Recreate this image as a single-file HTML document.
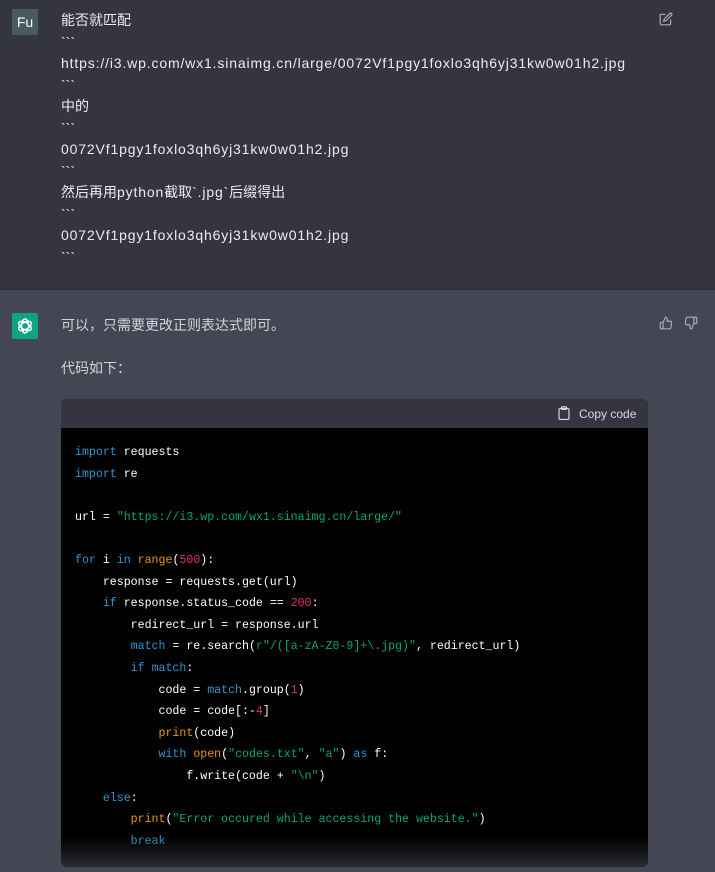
<!DOCTYPE html>
<html><head><meta charset="utf-8"><style>
*{margin:0;padding:0;box-sizing:border-box}
body{width:715px;height:872px;overflow:hidden;background:#444654;font-family:"Liberation Sans","Noto Sans CJK SC",sans-serif;color:#ececf1;font-size:14px}
.user{position:absolute;left:0;top:0;width:715px;height:290px;background:#343541;border-bottom:1px solid #2a2b32}
.av{position:absolute;left:12px;width:26px;height:26px;border-radius:2px}
.ut{position:absolute;left:61px;top:10px;line-height:21.5px;white-space:nowrap}
.l{letter-spacing:0.85px}
.at{position:absolute;left:61px;top:315px;line-height:21.5px;color:#d1d5db}
.code{position:absolute;left:61px;top:399px;width:587px;height:468px;border-radius:6px;overflow:hidden;background:#000}
.hd{height:29px;background:#343541;color:#d9d9e3;font-size:12px;position:relative}
pre{font-family:"Liberation Mono","Noto Sans CJK SC",monospace;font-size:11.6px;line-height:21.6px;color:#fff;padding:14px 0 0 14px}
.k{color:#2e95d3}.s{color:#00a67d}.n{color:#df3079}.b{color:#e9950c}
</style></head><body>
<div class="user">
<div class="av" style="top:9px;background:#4a5a63;color:#fff;font-size:14px;text-align:center;line-height:26px">Fu</div>
<div class="ut">能否就匹配<br>&#96;&#96;&#96;<br><span class="l">https://i3.wp.com/wx1.sinaimg.cn/large/0072Vf1pgy1foxlo3qh6yj31kw0w01h2.jpg</span><br>&#96;&#96;&#96;<br>中的<br>&#96;&#96;&#96;<br><span class="l">0072Vf1pgy1foxlo3qh6yj31kw0w01h2.jpg</span><br>&#96;&#96;&#96;<br>然后再用<span class="l">python</span>截取<span class="l">&#96;.jpg&#96;</span>后缀得出<br>&#96;&#96;&#96;<br><span class="l">0072Vf1pgy1foxlo3qh6yj31kw0w01h2.jpg</span><br>&#96;&#96;&#96;</div>
<svg style="position:absolute;left:659px;top:12px" width="14" height="14" viewBox="0 0 24 24" fill="none" stroke="#acacbe" stroke-width="2"><path d="M11 4H4a2 2 0 0 0-2 2v14a2 2 0 0 0 2 2h14a2 2 0 0 0 2-2v-7"/><path d="M18.5 2.5a2.1 2.1 0 0 1 3 3L12 15l-4 1 1-4z"/></svg>
</div>
<div class="av" style="top:313px;background:#10a37f"><svg width="26" height="26" viewBox="0 0 26 26" fill="none" stroke="#fff" stroke-width="1.4"><g transform="translate(13 13)"><ellipse rx="3.5" ry="7"/><ellipse rx="3.5" ry="7" transform="rotate(60)"/><ellipse rx="3.5" ry="7" transform="rotate(120)"/></g></svg></div>
<div class="at">可以，只需要更改正则表达式即可。<br><br>代码如下：</div>
<svg style="position:absolute;left:659px;top:316px" width="14" height="14" viewBox="0 0 24 24" fill="none" stroke="#acacbe" stroke-width="2"><path d="M14 9V5a3 3 0 0 0-3-3l-4 9v11h11.3a2 2 0 0 0 2-1.7l1.4-9a2 2 0 0 0-2-2.3zM7 22H4a2 2 0 0 1-2-2v-7a2 2 0 0 1 2-2h3"/></svg>
<svg style="position:absolute;left:684px;top:316px" width="14" height="14" viewBox="0 0 24 24" fill="none" stroke="#acacbe" stroke-width="2"><path d="M10 15v4a3 3 0 0 0 3 3l4-9V2H5.7a2 2 0 0 0-2 1.7l-1.4 9a2 2 0 0 0 2 2.3zM17 2h3a2 2 0 0 1 2 2v7a2 2 0 0 1-2 2h-3"/></svg>
<div class="code">
<div class="hd"><svg style="position:absolute;left:497px;top:7px" width="12" height="14" viewBox="0 0 12 14" fill="none" stroke="#d9d9e3" stroke-width="1.2"><rect x="1" y="2.5" width="10" height="11" rx="1.5"/><rect x="3.5" y="0.8" width="5" height="2.6" rx="0.6"/></svg><span style="position:absolute;left:518px;top:8px">Copy code</span></div>
<pre><span class="k">import</span> requests
<span class="k">import</span> re

url = <span class="s">"https://i3.wp.com/wx1.sinaimg.cn/large/"</span>

<span class="k">for</span> i <span class="k">in</span> <span class="b">range</span>(<span class="n">500</span>):
    response = requests.get(url)
    <span class="k">if</span> response.status_code == <span class="n">200</span>:
        redirect_url = response.url
        <span class="k">match</span> = re.search(<span class="s">r"/([a-zA-Z0-9]+\.jpg)"</span>, redirect_url)
        <span class="k">if</span> <span class="k">match</span>:
            code = <span class="k">match</span>.group(<span class="n">1</span>)
            code = code[:-<span class="n">4</span>]
            <span class="b">print</span>(code)
            <span class="k">with</span> <span class="b">open</span>(<span class="s">"codes.txt"</span>, <span class="s">"a"</span>) <span class="k">as</span> f:
                f.write(code + <span class="s">"\n"</span>)
    <span class="k">else</span>:
        <span class="b">print</span>(<span class="s">"Error occured while accessing the website."</span>)
        <span class="k">break</span></pre>
<div style="position:absolute;left:0;bottom:0;width:100%;height:30px;background:linear-gradient(rgba(0,0,0,0),#2a2b32)"></div>
</div>
</body></html>
